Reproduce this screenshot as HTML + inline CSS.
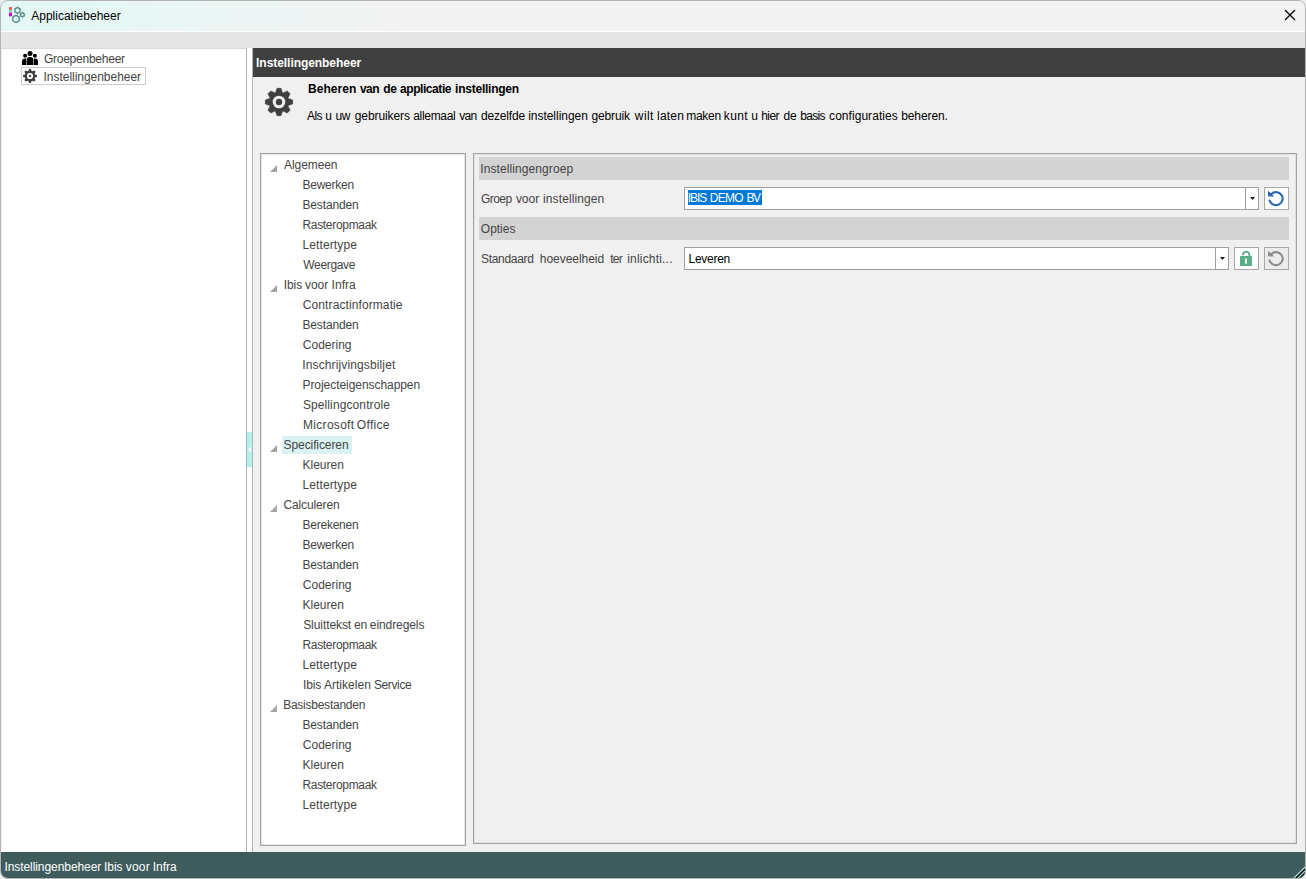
<!DOCTYPE html>
<html lang="nl">
<head>
<meta charset="utf-8">
<title>Applicatiebeheer</title>
<style>
*{box-sizing:border-box;margin:0;padding:0}
html,body{width:1306px;height:879px;overflow:hidden;background:#ededed}
body{font-family:"Liberation Sans",sans-serif;font-size:12px;color:#444;position:relative}
.abs{position:absolute}
#win{position:absolute;left:0;top:0;width:1306px;height:879px;border:1px solid #b3b3b3;border-radius:8px;overflow:hidden;background:#f0f0f0}
#titlebar{position:absolute;left:0;top:0;width:1304px;height:30px;background:linear-gradient(90deg,#e4f8f5 0,#e6f7f5 110px,#f3f3f3 400px)}
#titleline{position:absolute;left:0;top:30px;width:1304px;height:1px;background:#fff}
#menuband{position:absolute;left:0;top:31px;width:1304px;height:17px;background:#e5e5e5}
#title{position:absolute;left:30px;top:7px;font-size:12px;color:#000;white-space:nowrap;line-height:16px}
#leftpane{position:absolute;left:1px;top:48px;width:244px;height:803px;background:#fff}
#leftline{position:absolute;left:0;top:47px;width:245px;height:1px;background:#d9d9d9}
#split1{position:absolute;left:245px;top:47px;width:1px;height:804px;background:#b4b4b4}
#splitmid{position:absolute;left:246px;top:47px;width:5px;height:804px;background:#fff}
#split2{position:absolute;left:251px;top:47px;width:1px;height:804px;background:#b4b4b4}
#handle{position:absolute;left:246px;top:431px;width:5px;height:35px;background:#b1f1ec}
#darkhdr{position:absolute;left:252px;top:47px;width:1052px;height:29px;background:#404040}
#darkhdr span{position:absolute;left:3.6px;top:7px;color:#fff;font-weight:bold;font-size:12px;white-space:nowrap;line-height:16px}
#status{position:absolute;left:0;top:851px;width:1304px;height:27px;background:#3e5c5c}
#status span{position:absolute;left:4px;top:7px;color:#fff;font-size:12px;white-space:nowrap;line-height:16px}
.t{position:absolute;white-space:pre;line-height:16px;height:16px}
#treebox{position:absolute;left:259px;top:152px;width:206px;height:693px;background:#fff;border:1px solid #a3a3a3;box-shadow:inset 0 0 0 1px rgba(0,0,0,.1)}
#rightbox{position:absolute;left:472px;top:152px;width:824px;height:691px;background:#f0f0f0;border:1px solid #a3a3a3;box-shadow:inset 0 0 0 1px rgba(0,0,0,.07)}
.band{position:absolute;left:478px;width:810px;height:23px;background:#d3d3d3}
.combo{position:absolute;height:23px;background:#fff;border:1px solid #a0a0a0}
.btn{position:absolute;width:25px;height:23px;background:#fff;border:1px solid #a8a8a8}
</style>
</head>
<body>
<div id="win">
  <div id="titlebar"></div>
  <div id="titleline"></div>
  <div id="menuband"></div>
  <div id="title" style="left:30.2px;letter-spacing:0.007px;">Applicatiebeheer</div>
  <div id="leftpane"></div><div id="leftline"></div>
  <div id="split1"></div><div id="splitmid"></div><div id="split2"></div><div id="handle"></div>
  <div id="darkhdr"><span id="dh" style="left:3.1px;letter-spacing:-0.056px;">Instellingenbeheer</span></div>
  <div id="treebox"></div>
  <div id="rightbox"></div>
  <!--TREE-->
  <svg class="abs" style="left:269px;top:164px" width="7" height="7"><path d="M7 0V7H0Z" fill="#a6a6a6"/></svg>
  <div class="t ti" id="tr0" style="left:283.1px;letter-spacing:-0.094px;top:156px">Algemeen</div>
  <div class="t ti" id="tr1" style="left:301.45px;letter-spacing:-0.234px;top:176px">Bewerken</div>
  <div class="t ti" id="tr2" style="left:301.45px;letter-spacing:-0.132px;top:196px">Bestanden</div>
  <div class="t ti" id="tr3" style="left:301.45px;letter-spacing:-0.312px;top:216px">Rasteropmaak</div>
  <div class="t ti" id="tr4" style="left:301.45px;letter-spacing:0.123px;top:236px">Lettertype</div>
  <div class="t ti" id="tr5" style="left:302.35px;letter-spacing:-0.343px;top:256px">Weergave</div>
  <svg class="abs" style="left:269px;top:284px" width="7" height="7"><path d="M7 0V7H0Z" fill="#a6a6a6"/></svg>
  <div class="t ti" id="tr6_0" style="left:282.7px;letter-spacing:-0.058px;top:276px">Ibis</div> <div class="t ti" id="tr6_1" style="left:304px;letter-spacing:-0.049px;top:276px">voor</div> <div class="t ti" id="tr6_2" style="left:330.5px;letter-spacing:0.066px;top:276px">Infra</div>
  <div class="t ti" id="tr7" style="left:301.8px;letter-spacing:0.099px;top:296px">Contractinformatie</div>
  <div class="t ti" id="tr8" style="left:301.45px;letter-spacing:-0.132px;top:316px">Bestanden</div>
  <div class="t ti" id="tr9" style="left:301.8px;letter-spacing:0.004px;top:336px">Codering</div>
  <div class="t ti" id="tr10" style="left:301.3px;letter-spacing:0.127px;top:356px">Inschrijvingsbiljet</div>
  <div class="t ti" id="tr11" style="left:301.45px;letter-spacing:-0.054px;top:376px">Projecteigenschappen</div>
  <div class="t ti" id="tr12" style="left:301.9px;letter-spacing:0.109px;top:396px">Spellingcontrole</div>
  <div class="t ti" id="tr13_0" style="left:302.05px;letter-spacing:0.295px;top:416px">Microsoft</div> <div class="t ti" id="tr13_1" style="left:355.85px;letter-spacing:0.31px;top:416px">Office</div>
  <svg class="abs" style="left:269px;top:444px" width="7" height="7"><path d="M7 0V7H0Z" fill="#a6a6a6"/></svg>
  <div class="abs" style="left:281px;top:435px;width:70px;height:18px;background:#daf3f2"></div>
  <div class="t ti" id="tr14" style="left:282.6px;letter-spacing:-0.096px;top:436px">Specificeren</div>
  <div class="t ti" id="tr15" style="left:301.45px;letter-spacing:0.01px;top:456px">Kleuren</div>
  <div class="t ti" id="tr16" style="left:301.45px;letter-spacing:0.123px;top:476px">Lettertype</div>
  <svg class="abs" style="left:269px;top:504px" width="7" height="7"><path d="M7 0V7H0Z" fill="#a6a6a6"/></svg>
  <div class="t ti" id="tr17" style="left:282.5px;letter-spacing:-0.132px;top:496px">Calculeren</div>
  <div class="t ti" id="tr18" style="left:301.45px;letter-spacing:-0.227px;top:516px">Berekenen</div>
  <div class="t ti" id="tr19" style="left:301.45px;letter-spacing:-0.234px;top:536px">Bewerken</div>
  <div class="t ti" id="tr20" style="left:301.45px;letter-spacing:-0.132px;top:556px">Bestanden</div>
  <div class="t ti" id="tr21" style="left:301.8px;letter-spacing:0.004px;top:576px">Codering</div>
  <div class="t ti" id="tr22" style="left:301.45px;letter-spacing:0.01px;top:596px">Kleuren</div>
  <div class="t ti" id="tr23_0" style="left:302.2px;letter-spacing:-0.078px;top:616px">Sluittekst</div> <div class="t ti" id="tr23_1" style="left:353.1px;letter-spacing:-0.274px;top:616px">en</div> <div class="t ti" id="tr23_2" style="left:368.8px;letter-spacing:-0.086px;top:616px">eindregels</div>
  <div class="t ti" id="tr24" style="left:301.45px;letter-spacing:-0.312px;top:636px">Rasteropmaak</div>
  <div class="t ti" id="tr25" style="left:301.45px;letter-spacing:0.123px;top:656px">Lettertype</div>
  <div class="t ti" id="tr26_0" style="left:301.9px;letter-spacing:-0.091px;top:676px">Ibis</div> <div class="t ti" id="tr26_1" style="left:322.9px;letter-spacing:0.036px;top:676px">Artikelen</div> <div class="t ti" id="tr26_2" style="left:372.9px;letter-spacing:-0.365px;top:676px">Service</div>
  <svg class="abs" style="left:269px;top:704px" width="7" height="7"><path d="M7 0V7H0Z" fill="#a6a6a6"/></svg>
  <div class="t ti" id="tr27" style="left:282.15px;letter-spacing:-0.244px;top:696px">Basisbestanden</div>
  <div class="t ti" id="tr28" style="left:301.45px;letter-spacing:-0.132px;top:716px">Bestanden</div>
  <div class="t ti" id="tr29" style="left:301.8px;letter-spacing:0.004px;top:736px">Codering</div>
  <div class="t ti" id="tr30" style="left:301.45px;letter-spacing:0.01px;top:756px">Kleuren</div>
  <div class="t ti" id="tr31" style="left:301.45px;letter-spacing:-0.312px;top:776px">Rasteropmaak</div>
  <div class="t ti" id="tr32" style="left:301.45px;letter-spacing:0.123px;top:796px">Lettertype</div>
  <!--/TREE-->

  <!--LEFT-->
  <div class="abs" style="left:20px;top:66px;width:125px;height:18px;border:1px solid #cbcbcb;background:#fff"></div>
  <div class="t" id="lp1" style="left:42.9px;letter-spacing:-0.239px;top:50px">Groepenbeheer</div>
  <div class="t" id="lp2" style="left:42.5px;letter-spacing:-0.028px;top:68px">Instellingenbeheer</div>
  <!--HEAD-->
  <div id="hd1g"><div class="t" id="hd1_0" style="left:307.0px;letter-spacing:0.035px;top:80px;font-weight:bold;color:#000">Beheren</div> <div class="t" id="hd1_1" style="left:358.9px;letter-spacing:-0.474px;top:80px;font-weight:bold;color:#000">van</div> <div class="t" id="hd1_2" style="left:382.25px;letter-spacing:-0.38px;top:80px;font-weight:bold;color:#000">de</div> <div class="t" id="hd1_3" style="left:399.05px;letter-spacing:-0.437px;top:80px;font-weight:bold;color:#000">applicatie</div> <div class="t" id="hd1_4" style="left:454.1px;letter-spacing:-0.24px;top:80px;font-weight:bold;color:#000">instellingen</div></div>
  <div id="hd2g"><div class="t" id="hd2_0" style="left:306.1px;letter-spacing:-0.585px;top:107px;color:#000">Als</div> <div class="t" id="hd2_1" style="left:324.35px;letter-spacing:0px;top:107px;color:#000">u</div> <div class="t" id="hd2_2" style="left:334.45px;letter-spacing:-0.324px;top:107px;color:#000">uw</div> <div class="t" id="hd2_3" style="left:353.8px;letter-spacing:-0.103px;top:107px;color:#000">gebruikers</div> <div class="t" id="hd2_4" style="left:412.2px;letter-spacing:-0.303px;top:107px;color:#000">allemaal</div> <div class="t" id="hd2_5" style="left:458.2px;letter-spacing:-0.637px;top:107px;color:#000">van</div> <div class="t" id="hd2_6" style="left:480.0px;letter-spacing:-0.164px;top:107px;color:#000">dezelfde</div> <div class="t" id="hd2_7" style="left:527.2px;letter-spacing:-0.033px;top:107px;color:#000">instellingen</div> <div class="t" id="hd2_8" style="left:590.6px;letter-spacing:-0.168px;top:107px;color:#000">gebruik</div> <div class="t" id="hd2_9" style="left:633.85px;letter-spacing:0.401px;top:107px;color:#000">wilt</div> <div class="t" id="hd2_10" style="left:656.0px;letter-spacing:0.213px;top:107px;color:#000">laten</div> <div class="t" id="hd2_11" style="left:685.15px;letter-spacing:-0.248px;top:107px;color:#000">maken</div> <div class="t" id="hd2_12" style="left:722.8px;letter-spacing:0.334px;top:107px;color:#000">kunt</div> <div class="t" id="hd2_13" style="left:750.35px;letter-spacing:0px;top:107px;color:#000">u</div> <div class="t" id="hd2_14" style="left:760.2px;letter-spacing:-0.538px;top:107px;color:#000">hier</div> <div class="t" id="hd2_15" style="left:782.6px;letter-spacing:-0.224px;top:107px;color:#000">de</div> <div class="t" id="hd2_16" style="left:799.25px;letter-spacing:-0.666px;top:107px;color:#000">basis</div> <div class="t" id="hd2_17" style="left:828.1px;letter-spacing:0.047px;top:107px;color:#000">configuraties</div> <div class="t" id="hd2_18" style="left:900.15px;letter-spacing:-0.091px;top:107px;color:#000">beheren.</div></div>
  <!--RIGHT-->
  <div class="band" style="top:156px"></div>
  <div class="t" id="b1" style="left:479.3px;letter-spacing:0.086px;top:160px">Instellingengroep</div>
  <div class="t" id="l1_0" style="left:480.0px;letter-spacing:-0.544px;top:190px">Groep</div> <div class="t" id="l1_1" style="left:514.9px;letter-spacing:-0.016px;top:190px">voor</div> <div class="t" id="l1_2" style="left:542.1px;letter-spacing:0.094px;top:190px">instellingen</div>
  <div class="combo" style="left:683px;top:186px;width:575px"></div>
  <div class="abs" style="left:1244px;top:187px;width:1px;height:21px;background:#a0a0a0"></div>
  <div class="abs" style="left:687px;top:189px;width:74px;height:15px;background:#0078d7"></div>
  <div class="t" id="c1_0" style="left:686.8px;letter-spacing:-1.091px;top:189px;color:#fff">IBIS</div> <div class="t" id="c1_1" style="left:708.75px;letter-spacing:-0.705px;top:189px;color:#fff">DEMO</div> <div class="t" id="c1_2" style="left:745.45px;letter-spacing:-1.354px;top:189px;color:#fff">BV</div>
  <div class="btn" style="left:1263px;top:186px"></div>
  <div class="band" style="top:216px"></div>
  <div class="t" id="b2" style="left:479.85px;letter-spacing:-0.026px;top:220px">Opties</div>
  <div class="t" id="l2_0" style="left:480.1px;letter-spacing:-0.332px;top:250px">Standaard</div> <div class="t" id="l2_1" style="left:538.8px;letter-spacing:-0.04px;top:250px">hoeveelheid</div> <div class="t" id="l2_2" style="left:609.15px;letter-spacing:-0.679px;top:250px">ter</div> <div class="t" id="l2_3" style="left:626.2px;letter-spacing:0.194px;top:250px">inlichti...</div>
  <div class="combo" style="left:683px;top:246px;width:545px"></div>
  <div class="abs" style="left:1214px;top:247px;width:1px;height:21px;background:#a0a0a0"></div>
  <div class="t" id="c2" style="left:687.55px;letter-spacing:-0.274px;top:250px;color:#000">Leveren</div>
  <div class="btn" style="left:1233px;top:246px"></div>
  <div class="btn" style="left:1263px;top:246px;background:#ececec"></div>
  <!--ICONS--><svg class="abs" style="left:-1px;top:-1px;pointer-events:none;z-index:5" width="1306" height="879" viewBox="0 0 1306 879">
  <rect x="9" y="7" width="3" height="3" fill="#ec644b"/><rect x="9" y="10" width="3" height="2.7" fill="#80d8cf"/><rect x="9" y="12.7" width="3" height="3.6" fill="#d902e6"/>
  <path d="M17.50 6.80 L20.62 8.60 L20.62 12.20 L17.50 14.00 L14.38 12.20 L14.38 8.60Z" fill="#558a87" stroke="#558a87" stroke-width="0.3" stroke-linejoin="round"/><path d="M17.50 8.10 L19.49 9.25 L19.49 11.55 L17.50 12.70 L15.51 11.55 L15.51 9.25Z" fill="#8ccbc6"/><circle cx="17.5" cy="10.4" r="1.7" fill="#e6fdfb"/>
  <path d="M22.40 12.00 L24.82 13.40 L24.82 16.20 L22.40 17.60 L19.98 16.20 L19.98 13.40Z" fill="#558a87" stroke="#558a87" stroke-width="0.3" stroke-linejoin="round"/><path d="M22.40 13.30 L23.70 14.05 L23.70 15.55 L22.40 16.30 L21.10 15.55 L21.10 14.05Z" fill="#8ccbc6"/><circle cx="22.4" cy="14.8" r="0.9" fill="#e6fdfb"/>
  <path d="M16.00 14.60 L19.72 16.75 L19.72 21.05 L16.00 23.20 L12.28 21.05 L12.28 16.75Z" fill="#558a87" stroke="#558a87" stroke-width="0.3" stroke-linejoin="round"/><path d="M16.00 15.90 L18.60 17.40 L18.60 20.40 L16.00 21.90 L13.40 20.40 L13.40 17.40Z" fill="#8ccbc6"/><circle cx="16" cy="18.9" r="2.4" fill="#e6fdfb"/>
  <path d="M1285 10L1295 20M1295 10L1285 20" stroke="#000" stroke-width="1.25" fill="none"/>
  <g fill="#000"><circle cx="30" cy="53.5" r="2.5"/><path d="M26.6 64.9V60.1a3 3 0 0 1 3-3h0.8a3 3 0 0 1 3 3V64.9Z"/><circle cx="25.1" cy="55.8" r="2"/><path d="M22 64.9V61.6a3 3 0 0 1 3-3h1.1V64.9Z"/><circle cx="34.9" cy="55.8" r="2"/><path d="M38 64.9V61.6a3 3 0 0 0-3-3h-1.1V64.9Z"/></g>
  <path d="M28.40 71.05 L29.10 69.06 L30.90 69.06 L31.60 71.05 L32.37 71.37 L34.27 70.45 L35.55 71.73 L34.63 73.63 L34.95 74.40 L36.94 75.10 L36.94 76.90 L34.95 77.60 L34.63 78.37 L35.55 80.27 L34.27 81.55 L32.37 80.63 L31.60 80.95 L30.90 82.94 L29.10 82.94 L28.40 80.95 L27.63 80.63 L25.73 81.55 L24.45 80.27 L25.37 78.37 L25.05 77.60 L23.06 76.90 L23.06 75.10 L25.05 74.40 L25.37 73.63 L24.45 71.73 L25.73 70.45 L27.63 71.37Z" fill="#3f3f3f"/><circle cx="30" cy="76" r="3.1" fill="#fff"/><circle cx="30" cy="76" r="1.2" fill="#3f3f3f"/>
  <path d="M275.50 92.85 L277.00 88.35 L281.00 88.35 L282.50 92.85 L283.00 93.05 L287.24 90.93 L290.07 93.76 L287.95 98.00 L288.15 98.50 L292.65 100.00 L292.65 104.00 L288.15 105.50 L287.95 106.00 L290.07 110.24 L287.24 113.07 L283.00 110.95 L282.50 111.15 L281.00 115.65 L277.00 115.65 L275.50 111.15 L275.00 110.95 L270.76 113.07 L267.93 110.24 L270.05 106.00 L269.85 105.50 L265.35 104.00 L265.35 100.00 L269.85 98.50 L270.05 98.00 L267.93 93.76 L270.76 90.93 L275.00 93.05Z" fill="#404040" stroke="#404040" stroke-width="0.6" stroke-linejoin="round"/><circle cx="279" cy="102" r="6.3" fill="#f0f0f0"/><circle cx="279" cy="102" r="3.2" fill="#404040"/>
  <path d="M248.3 449.5L251 446.5V452.5Z" fill="#fff"/>
  <path d="M1250 197h5l-2.5 3Z" fill="#1a1a1a"/><path d="M1220 257h5l-2.5 3Z" fill="#1a1a1a"/>
  <path d="M1271.26 194.00A6.7 6.5 0 1 1 1269.63 200.61" stroke="#2a68b0" stroke-width="2.1" fill="none" stroke-linecap="round"/><path d="M1268.5 191.6V196.0H1273.4Z" fill="#2a68b0" stroke="#2a68b0" stroke-width="1" stroke-linejoin="round"/>
  <path d="M1271.26 254.00A6.7 6.5 0 1 1 1269.63 260.61" stroke="#8e8e8e" stroke-width="2.1" fill="none" stroke-linecap="round"/><path d="M1268.5 251.6V256.0H1273.4Z" fill="#8e8e8e" stroke="#8e8e8e" stroke-width="1" stroke-linejoin="round"/>
  <rect x="1240" y="256" width="12" height="10" rx="0.6" fill="#5aaf8b"/><rect x="1245" y="258.6" width="2" height="5.2" rx="0.8" fill="#fff"/><path d="M1242.8 255.2V254.9a3.3 3.3 0 0 1 6.6 0V256.5" stroke="#5aaf8b" stroke-width="1.9" fill="none"/>
  <g id="grip"><path d="M1294.4 878.5L1305.5 867.4V878.5Z" fill="#040c0b"/><path d="M1293.6 878.4L1305.4 866.6M1297.7 878.4L1305.4 870.7" stroke="#a9e1dd" stroke-width="1.25" fill="none"/></g>
  </svg><!--/ICONS-->
  <div id="status"><span class="t" id="st_0" style="left:3.4px;letter-spacing:-0.069px;">Instellingenbeheer</span> <span class="t" id="st_1" style="left:102.9px;letter-spacing:0.009px;">Ibis</span> <span class="t" id="st_2" style="left:124.8px;letter-spacing:0.184px;">voor</span> <span class="t" id="st_3" style="left:151.8px;letter-spacing:-0.009px;">Infra</span></div>
</div>
</body>
</html>
